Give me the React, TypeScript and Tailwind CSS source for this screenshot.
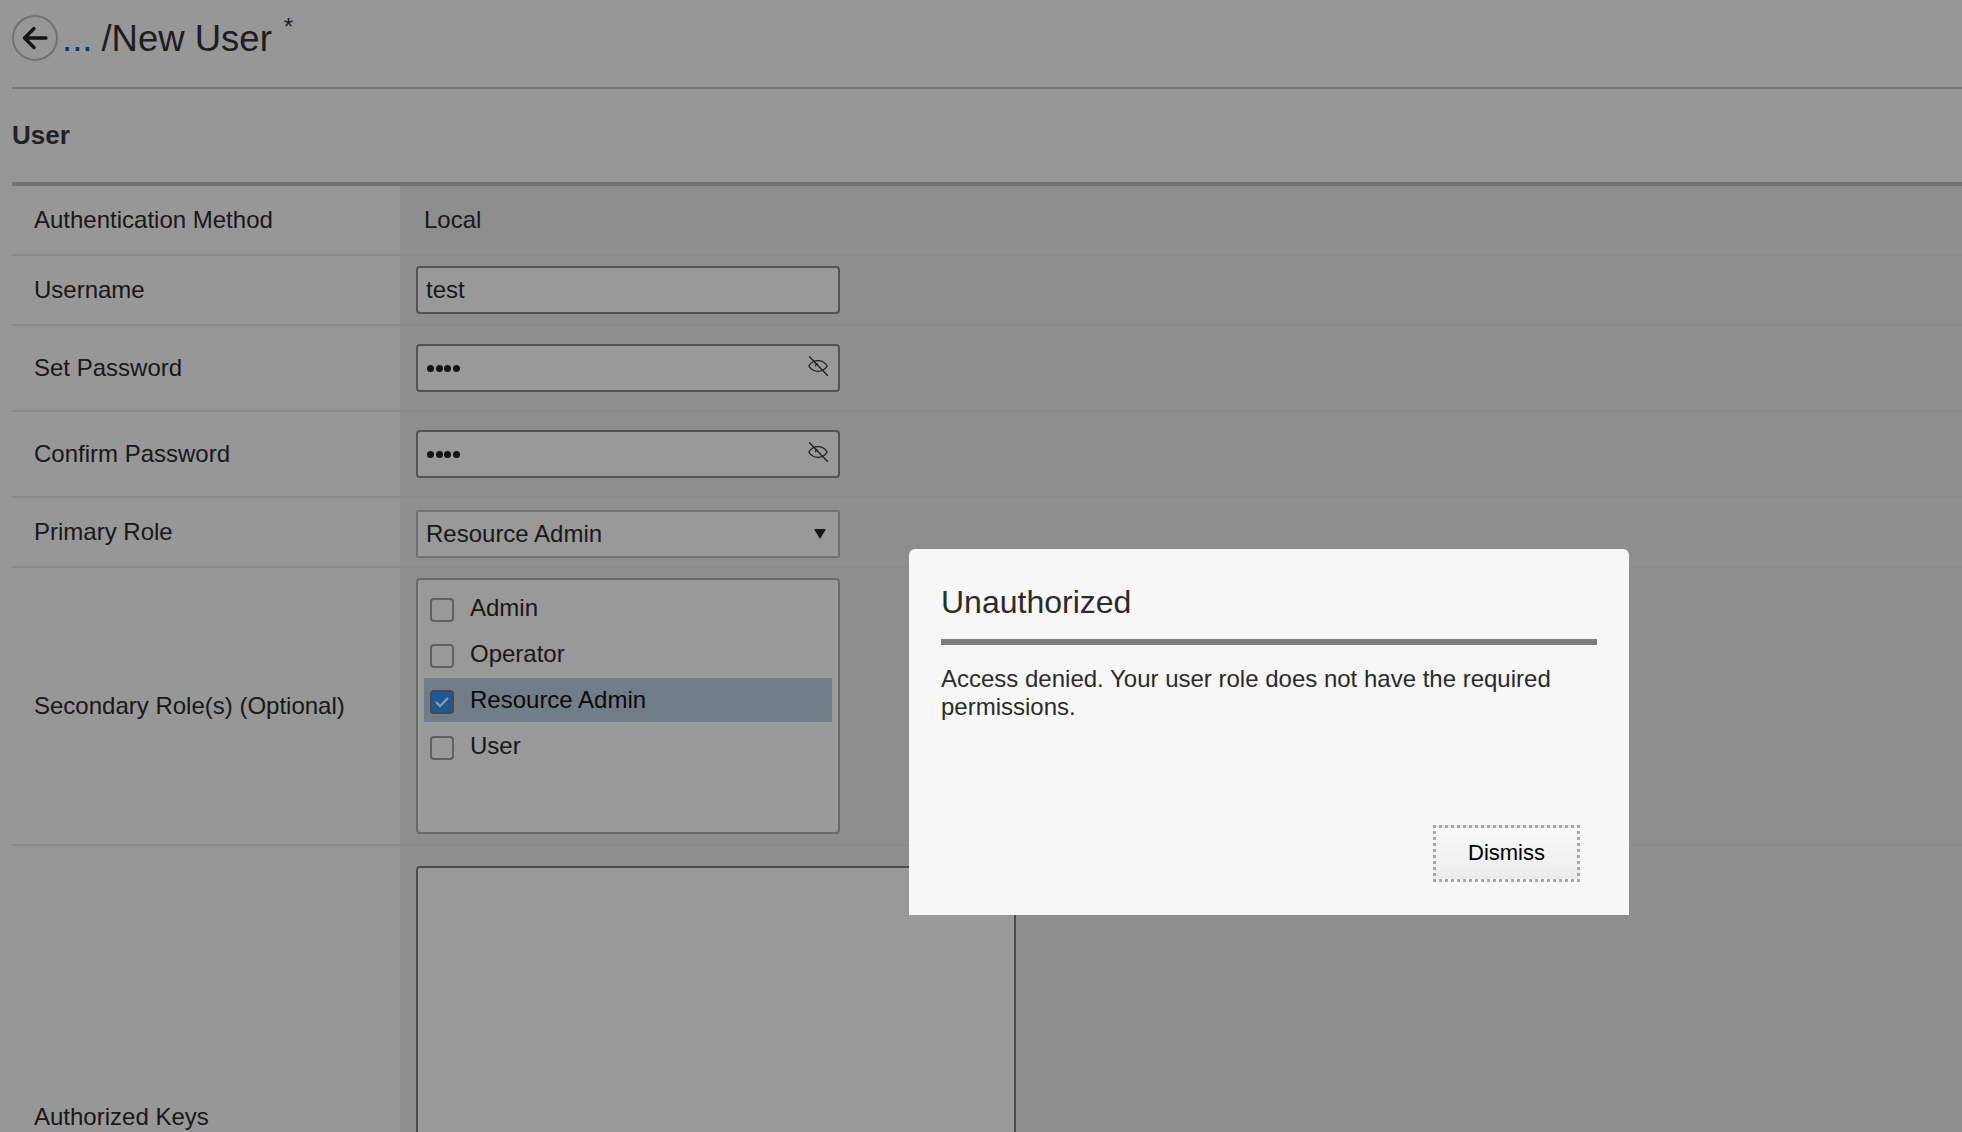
import React from 'react';

const FONT = "font-['Liberation_Sans',Arial,sans-serif]";

const EyeOff = () => (
    <svg width="20" height="20" viewBox="0 0 20 20" fill="none" stroke="#333" strokeWidth="1.3" strokeLinecap="round" className="mb-[4px]">
        <path d="M0.8 10 C3 6.4 6.2 4.6 10 4.6 C13.8 4.6 17 6.4 19.2 10 C17 13.6 13.8 15.4 10 15.4 C6.2 15.4 3 13.6 0.8 10 Z" />
        <path d="M10 7 A3 3 0 0 0 7.2 11 L10 7 Z" fill="#333" stroke="none" />
        <path d="M1.5 0.8 L19.5 19.5" />
    </svg>
);

const Row = ({ label, height, children }: { label: string; height: string; children?: React.ReactNode }) => (
    <div className={`flex ${height} border-b-2 border-[#e6e6e6]`}>
        <div className="w-[388px] shrink-0 pl-[22px] flex items-center text-[24px] text-[#2b2b2b]">{label}</div>
        <div className="flex-1 bg-[#ededed] pl-[16px] flex items-center text-[24px] text-[#2b2b2b]">{children}</div>
    </div>
);

const PasswordInput = () => (
    <div className="w-[424px] h-[48px] rounded-[4px] border-2 border-[#8a8a8a] bg-[#ffffff] flex items-center justify-between pl-[9px] pr-[10px]">
        <span className="flex gap-[1.5px] items-center">
            {[0, 1, 2, 3].map((i) => (
                <span key={i} className="w-[7px] h-[7px] rounded-full bg-[#222]" />
            ))}
        </span>
        <EyeOff />
    </div>
);

const ROLES = ['Admin', 'Operator', 'Resource Admin', 'User'];

export default function App() {
    return (
        <div className={`relative w-[1962px] h-[1132px] overflow-hidden bg-[#fcfcfc] ${FONT}`}>
            <div className="pl-[12px]">
                <div className="h-[89px] flex items-start pt-[15px] border-b-2 border-[#c6c6c6]">
                    <div className="w-[46px] h-[46px] rounded-full border-2 border-[#bdbdbd] flex items-center justify-center">
                        <svg width="28" height="28" viewBox="0 0 28 28" fill="none" stroke="#222" strokeWidth="3.4" strokeLinecap="round" strokeLinejoin="round">
                            <path d="M25 14 H4 M13 4.5 L3.5 14 L13 23.5" />
                        </svg>
                    </div>
                    <span className="ml-[4px] text-[36.5px] leading-[48px] text-[#0a5ac0]">...</span>
                    <span className="ml-[9px] text-[36.5px] leading-[48px] text-[#333]">/New User</span>
                    <span className="ml-[12px] -mt-[3px] text-[24px] leading-[30px] text-[#333]">*</span>
                </div>
                <div className="h-[97px] flex items-center border-b-[4px] border-[#c0c0c0] text-[26px] font-bold text-[#3a3a3a]">User</div>
                <Row label="Authentication Method" height="h-[70px]">
                    <span className="pl-[8px]">Local</span>
                </Row>
                <Row label="Username" height="h-[70px]">
                    <div className="w-[424px] h-[48px] rounded-[4px] border-2 border-[#8a8a8a] bg-[#ffffff] flex items-center pl-[8px]">test</div>
                </Row>
                <Row label="Set Password" height="h-[86px]">
                    <PasswordInput />
                </Row>
                <Row label="Confirm Password" height="h-[86px]">
                    <PasswordInput />
                </Row>
                <Row label="Primary Role" height="h-[70px]">
                    <div className="w-[424px] h-[48px] mt-[3px] rounded-[2px] border-2 border-[#bcbcbc] bg-[#ffffff] flex items-center justify-between pl-[8px] pr-[12px]">
                        Resource Admin
                        <svg width="12" height="10" viewBox="0 0 12 10" fill="#2b2b2b">
                            <path d="M0 0 H12 L6 10 Z" />
                        </svg>
                    </div>
                </Row>
                <Row label="Secondary Role(s) (Optional)" height="h-[278px]">
                    <div className="w-[424px] h-[256px] rounded-[4px] border-2 border-[#b0b0b0] bg-[#ffffff] px-[6px] pt-[6px]">
                        {ROLES.map((role) => (
                            <div key={role} className={`h-[44px] mb-[2px] flex items-center gap-[16px] pl-[6px] ${role === 'Resource Admin' ? 'bg-[#bed0e6] text-[#111]' : ''}`}>
                                <span className={`w-[24px] h-[24px] mt-[3px] rounded-[4px] border-2 flex items-center justify-center ${role === 'Resource Admin' ? 'border-[#7a7a7a] bg-[#2b96ff]' : 'border-[#a0a0a0] bg-[#ffffff]'}`}>
                                    {role === 'Resource Admin' && (
                                        <svg width="16" height="14" viewBox="0 0 16 14" fill="none" stroke="#fff" strokeWidth="2.4">
                                            <path d="M2 7 L6 11 L14 3" />
                                        </svg>
                                    )}
                                </span>
                                {role}
                            </div>
                        ))}
                    </div>
                </Row>
                <div className="flex h-[291px]">
                    <div className="w-[388px] shrink-0 pl-[22px] flex items-end pb-[2px] text-[24px] text-[#2b2b2b]">Authorized Keys</div>
                    <div className="flex-1 bg-[#ededed] pl-[16px] pt-[20px]">
                        <div className="w-[600px] h-[300px] rounded-[4px] border-2 border-[#7e7e7e] bg-[#ffffff]" />
                    </div>
                </div>
            </div>

            {/* overlay + dialog */}
            <div className="absolute inset-0 bg-black/40" />
            <div className="absolute left-[909px] top-[549px] w-[720px] h-[366px] bg-[#f7f7f7] rounded-t-[6px] px-[32px] pt-[32px] flex flex-col">
                <div className="h-[64px] border-b-[6px] border-[#7c7c7c] text-[32px] leading-[42px] text-[#2b2b2b]">Unauthorized</div>
                <p className="mt-[20px] text-[24px] leading-[28px] text-[#2b2b2b]">Access denied. Your user role does not have the required permissions.</p>
                <button className="absolute left-[524px] top-[276px] w-[147px] h-[57px] pb-[3px] border-[3px] border-dotted border-[#a8a8a8] bg-gradient-to-b from-[#fafafa] to-[#ebebeb] text-[22px] text-black">
                    Dismiss
                </button>
            </div>
        </div>
    );
}
